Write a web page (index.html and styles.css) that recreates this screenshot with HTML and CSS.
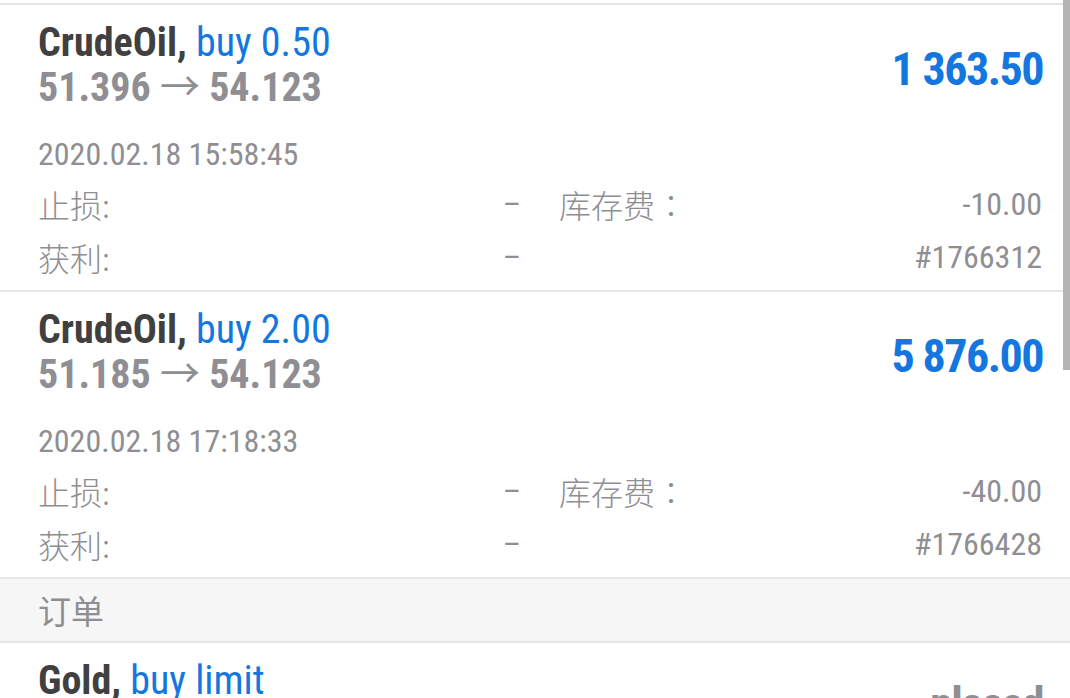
FILE: index.html
```html
<!DOCTYPE html>
<html>
<head>
    <meta charset="utf-8">
    <title>持仓</title>
    <link rel="stylesheet" href="styles.css">
</head>
<body>
    <div class="list">
        <div class="pos">
            <div class="head">
                <div class="sym">
                    <div class="title">CrudeOil, <span class="buy">buy 0.50</span></div>
                    <div class="price">51.396 <span class="arr">→</span> 54.123</div>
                </div>
                <div class="profit">1 363.50</div>
            </div>
            <div class="time">2020.02.18 15:58:45</div>
            <div class="info">
                <div class="cell"><span class="lbl">止损:</span><span class="val">–</span></div>
                <div class="cell"><span class="lbl">库存费<span class="colon">：</span></span><span class="val">-10.00</span></div>
                <div class="cell"><span class="lbl">获利:</span><span class="val">–</span></div>
                <div class="cell"><span class="lbl"></span><span class="val">#1766312</span></div>
            </div>
        </div>
        <div class="pos">
            <div class="head">
                <div class="sym">
                    <div class="title">CrudeOil, <span class="buy">buy 2.00</span></div>
                    <div class="price">51.185 <span class="arr">→</span> 54.123</div>
                </div>
                <div class="profit">5 876.00</div>
            </div>
            <div class="time">2020.02.18 17:18:33</div>
            <div class="info">
                <div class="cell"><span class="lbl">止损:</span><span class="val">–</span></div>
                <div class="cell"><span class="lbl">库存费<span class="colon">：</span></span><span class="val">-40.00</span></div>
                <div class="cell"><span class="lbl">获利:</span><span class="val">–</span></div>
                <div class="cell"><span class="lbl"></span><span class="val">#1766428</span></div>
            </div>
        </div>
        <div class="section">订单</div>
        <div class="pos">
            <div class="head">
                <div class="sym">
                    <div class="title">Gold, <span class="buy">buy limit</span></div>
                </div>
                <div class="profit state">placed</div>
            </div>
        </div>
    </div>
    <div class="scroll"></div>
</body>
</html>
```

FILE: styles.css
```css
html, body { margin: 0; padding: 0; background: #fff; overflow: hidden; }
body { font-family: "Roboto Condensed", Roboto, "Noto Sans CJK SC", sans-serif; font-stretch: condensed; color: #8e8e93; width: 1070px; height: 698px; position: relative; }
.list { padding-top: 3px; }
.list::before { content: ''; display: block; border-top: 2px solid #e6e6e6; }
.pos { padding: 15px 28px 6px 38px; border-bottom: 2px solid #e6e6e6; }
.head { display: flex; justify-content: space-between; align-items: center; }
.sym { min-height: 90px; }
.title { font-size: 40px; line-height: 45px; font-weight: 700; color: #404040; white-space: nowrap; }
.title .buy { font-weight: 400; color: #1477e0; }
.price { font-size: 40px; line-height: 45px; font-weight: 700; color: #8e8e93; white-space: nowrap; }
.price .arr { font-weight: 400; }
.profit { font-size: 46px; font-weight: 700; letter-spacing: -1.5px; margin: 8px -1px 0 0; color: #1477e0; white-space: nowrap; }
.profit.state { color: #8e8e93; margin-top: 2px; }
.time { font-size: 32px; line-height: 40px; margin-top: 24px; }
.info { display: grid; grid-template-columns: 1fr 1fr; column-gap: 38px; margin-top: 4px; }
.cell { display: flex; justify-content: space-between; font-size: 32px; line-height: 53px; }
.lbl { font-family: "Noto Sans CJK SC", sans-serif; font-weight: 300; font-stretch: normal; }
.colon { font-family: "Noto Sans CJK TC", sans-serif; }
.section { background: #f6f6f6; border-bottom: 2px solid #e6e6e6; padding-left: 38px; font-family: "Noto Sans CJK SC", sans-serif; font-stretch: normal; font-size: 33px; line-height: 62px; color: #8e8e93; }
.scroll { position: absolute; top: 0; right: 0; width: 7px; height: 370px; background: #b4b4b4; }
```
